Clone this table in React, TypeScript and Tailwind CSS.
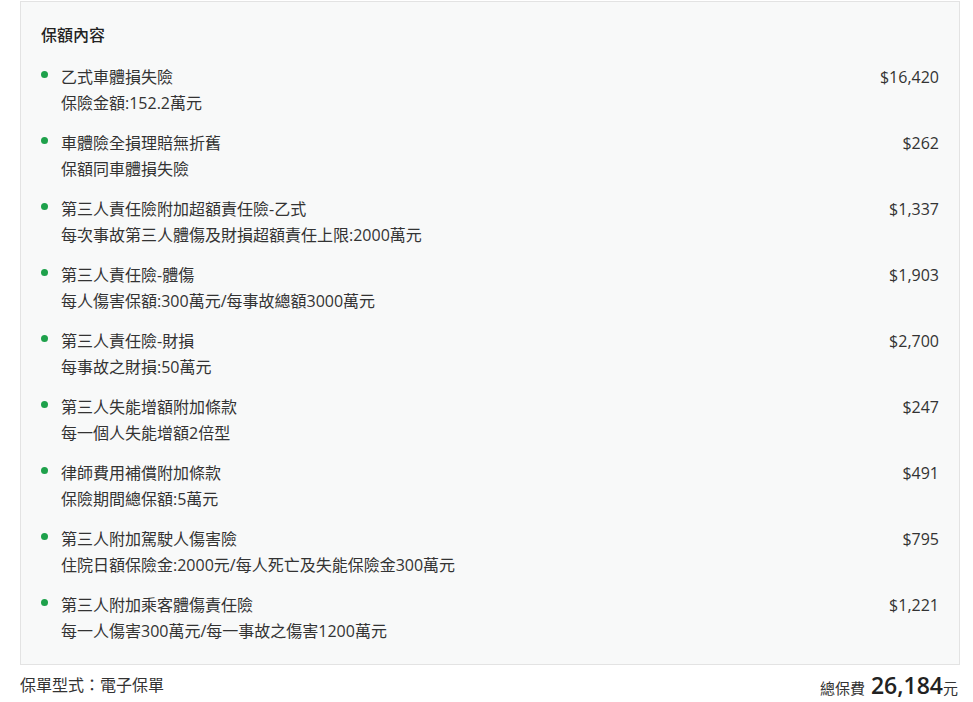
import React from "react";

const items = [
  { t: "乙式車體損失險", s: "保險金額:152.2萬元", p: "$16,420" },
  { t: "車體險全損理賠無折舊", s: "保額同車體損失險", p: "$262" },
  { t: "第三人責任險附加超額責任險-乙式", s: "每次事故第三人體傷及財損超額責任上限:2000萬元", p: "$1,337" },
  { t: "第三人責任險-體傷", s: "每人傷害保額:300萬元/每事故總額3000萬元", p: "$1,903" },
  { t: "第三人責任險-財損", s: "每事故之財損:50萬元", p: "$2,700" },
  { t: "第三人失能增額附加條款", s: "每一個人失能增額2倍型", p: "$247" },
  { t: "律師費用補償附加條款", s: "保險期間總保額:5萬元", p: "$491" },
  { t: "第三人附加駕駛人傷害險", s: "住院日額保險金:2000元/每人死亡及失能保險金300萬元", p: "$795" },
  { t: "第三人附加乘客體傷責任險", s: "每一人傷害300萬元/每一事故之傷害1200萬元", p: "$1,221" },
];

export default function App() {
  return (
    <div
      className="w-[973px] h-[702px] bg-white text-[#333] overflow-hidden"
      style={{ fontFamily: '"Open Sans", "Noto Sans CJK TC", sans-serif' }}
    >
      <div className="ml-[20px] mr-[13px] mt-[1px] border border-[#e3e3e3] bg-[#f8f9f9] pl-[20px] pr-[20px] pt-[22px] pb-[20px]">
        <div className="text-[16px] leading-[22px] font-medium text-[#222]">保額內容</div>
        <div className="mt-[18px] flex flex-col gap-[14px]">
          {items.map((it, i) => (
            <div key={i} className="flex items-start">
              <div className="w-[7px] h-[7px] rounded-full bg-[#1ea14b] mt-[7px] mr-[13px] shrink-0" />
              <div className="flex-1 text-[16px] leading-[26px]">
                <div>{it.t}</div>
                <div>{it.s}</div>
              </div>
              <div className="text-[16px] leading-[26px]">{it.p}</div>
            </div>
          ))}
        </div>
      </div>
      <div className="ml-[20px] mr-[15px] flex items-center justify-between h-[40px]">
        <div className="text-[16px] leading-[22px]">保單型式：電子保單</div>
        <div className="flex items-baseline">
          <span className="text-[15px]">總保費</span>
          <span className="text-[23px] font-semibold ml-[6px] text-[#222]">26,184</span>
          <span className="text-[15px]">元</span>
        </div>
      </div>
    </div>
  );
}
